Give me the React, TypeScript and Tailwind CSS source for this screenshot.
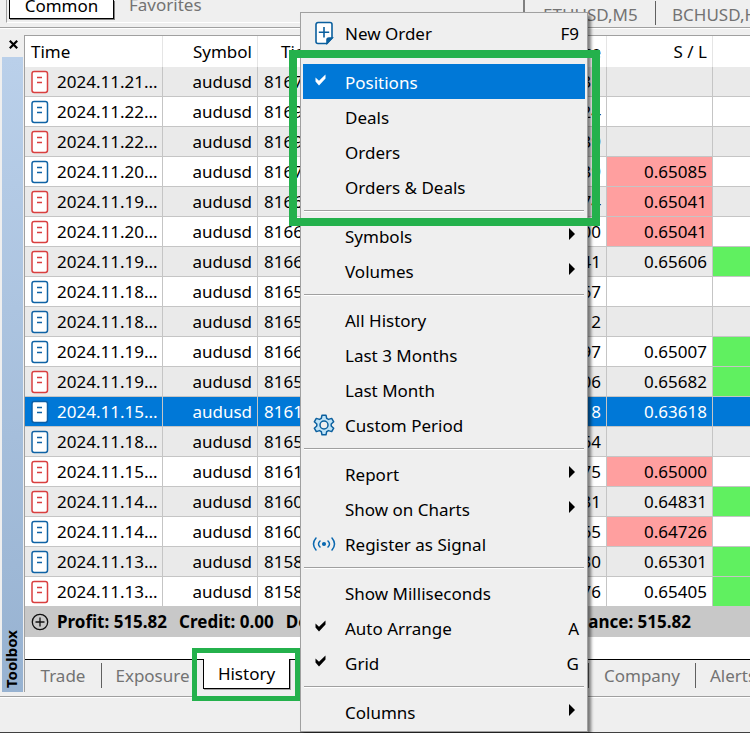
import type { ReactNode } from 'react'

type Deal = {
    time: string
    side: 'buy' | 'sell'
    ticket: string
    price: string
    sl?: string
    slHit?: boolean
    tpHit?: boolean
    selected?: boolean
}

const deals: Deal[] = [
    { time: '2024.11.21...', side: 'sell', ticket: '8167', price: '31' },
    { time: '2024.11.22...', side: 'buy', ticket: '8169', price: '24' },
    { time: '2024.11.22...', side: 'sell', ticket: '8169', price: '39' },
    { time: '2024.11.20...', side: 'buy', ticket: '8167', price: '39', sl: '0.65085', slHit: true },
    { time: '2024.11.19...', side: 'sell', ticket: '8166', price: '74', sl: '0.65041', slHit: true },
    { time: '2024.11.20...', side: 'sell', ticket: '8166', price: '00', sl: '0.65041', slHit: true },
    { time: '2024.11.19...', side: 'sell', ticket: '8166', price: '41', sl: '0.65606', tpHit: true },
    { time: '2024.11.18...', side: 'buy', ticket: '8165', price: '67' },
    { time: '2024.11.18...', side: 'buy', ticket: '8165', price: '2' },
    { time: '2024.11.19...', side: 'buy', ticket: '8166', price: '97', sl: '0.65007', tpHit: true },
    { time: '2024.11.19...', side: 'sell', ticket: '8165', price: '06', sl: '0.65682', tpHit: true },
    { time: '2024.11.15...', side: 'buy', ticket: '8161', price: '8', sl: '0.63618', selected: true },
    { time: '2024.11.18...', side: 'buy', ticket: '8165', price: '64' },
    { time: '2024.11.15...', side: 'sell', ticket: '8161', price: '75', sl: '0.65000', slHit: true },
    { time: '2024.11.14...', side: 'sell', ticket: '8160', price: '31', sl: '0.64831', tpHit: true },
    { time: '2024.11.14...', side: 'buy', ticket: '8160', price: '65', sl: '0.64726', slHit: true },
    { time: '2024.11.13...', side: 'buy', ticket: '8158', price: '30', sl: '0.65301', tpHit: true },
    { time: '2024.11.13...', side: 'sell', ticket: '8158', price: '76', sl: '0.65405', tpHit: true },
]

const DealIcon = ({ side, selected }: { side: 'buy' | 'sell'; selected?: boolean }) => {
    const color = side === 'buy' ? '#0f63a5' : '#d93f3f'
    return (
        <svg width="18" height="24" viewBox="0 0 18 24" className="shrink-0">
            <rect x="1" y="1.5" width="15.5" height="21" rx="2.2" fill="#fff" stroke={selected ? '#0b5fa8' : color} strokeWidth="1.5" />
            <path d="M6 7.500h5M6 12.500h5" stroke={color} strokeWidth="1.300" />
        </svg>
    )
}

const NewOrderIcon = () => (
    <svg width="20" height="24" viewBox="0 0 20 24" fill="none" stroke="#0a5f9e" strokeWidth="1.6">
        <path d="M4 1.500h12a2 2 0 0 1 2 2V17l-5 5.500H4a2 2 0 0 1-2-2V3.500a2 2 0 0 1 2-2z" fill="#fff" />
        <path d="M13 22v-3a2 2 0 0 1 2-2h3z" fill="#0a5f9e" />
        <path d="M10 6v10.500M4.800 11.200h10.400" />
    </svg>
)

const GearIcon = () => (
    <svg width="22" height="22" viewBox="0 0 22 22" stroke="#0a5f9e" strokeWidth="1.500" strokeLinejoin="round">
        <path
            d="M9 1.200h4l.7 3.200 1.800 1 3.200-1 2 3.400-2.500 2.200v2l2.500 2.200-2 3.400-3.200-1-1.800 1-.7 3.200H9l-.7-3.200-1.800-1-3.200 1-2-3.400 2.500-2.200v-2L1.300 7.800l2-3.400 3.200 1 1.800-1z"
            fill="#bfe3f7"
        />
        <circle cx="11" cy="11" r="4" fill="#efefef" />
    </svg>
)

const SignalIcon = () => (
    <svg width="24" height="16" viewBox="0 0 24 16" fill="none" stroke="#0a68b0" strokeWidth="1.500" strokeLinecap="round">
        <path d="M4 2Q-1 8 4 14M20 2q5 6 0 12M8 5q-3 3 0 6M16 5q3 3 0 6" />
        <circle cx="12" cy="8" r="1.300" fill="#0a68b0" />
    </svg>
)

const CheckIcon = () => (
    <svg width="12" height="12" viewBox="0 0 12 12" fill="currentColor">
        <path d="M.5 3.500 4 6.800 10.500.5V4.500L4 11.500.5 7.500z" />
    </svg>
)

type ItemProps = {
    label: string
    icon?: ReactNode
    checked?: boolean
    active?: boolean
    shortcut?: string
    submenu?: boolean
}

const MenuItem = ({ label, icon, checked, active, shortcut, submenu }: ItemProps) => (
    <button
        type="button"
        className={`flex h-[35px] w-full items-center pr-[6px] text-left ${active ? 'bg-[#0078d7] text-white' : 'text-black'}`}
    >
        <span className={`mr-[9px] ml-[9px] flex w-6 shrink-0 ${checked ? 'pb-1 pl-[3px]' : 'justify-center'}`}>
            {checked ? <CheckIcon /> : icon}
        </span>
        <span className="flex-1 pt-[2px] whitespace-nowrap">{label}</span>
        {shortcut && <span className="pt-[2px]">{shortcut}</span>}
        {submenu && (
            <svg width="6" height="12" viewBox="0 0 6 12" className="mr-1 mb-1">
                <path d="M0 0l6 6-6 6z" />
            </svg>
        )}
    </button>
)

const Separator = () => (
    <div className="h-[14px] px-px pt-[6px]">
        <div className="h-[2px] border-t border-[#a0a0a0] bg-white"></div>
    </div>
)

const ContextMenu = () => (
    <div className="absolute top-3 left-[300px] w-[288px] border border-[#a0a0a0] bg-[#efefef] p-[2px] shadow-[3px_3px_3px_rgba(0,0,0,0.5)]">
        <MenuItem label="New Order" icon={<NewOrderIcon />} shortcut="F9" />
        <Separator />
        <div className="relative">
            <MenuItem label="Positions" checked active />
            <MenuItem label="Deals" />
            <MenuItem label="Orders" />
            <MenuItem label="Orders &amp; Deals" />
            <div className="pointer-events-none absolute -top-[14px] -right-[15px] -bottom-[22px] -left-[14px] border-8 border-[#24b14c]"></div>
        </div>
        <Separator />
        <MenuItem label="Symbols" submenu />
        <MenuItem label="Volumes" submenu />
        <Separator />
        <MenuItem label="All History" />
        <MenuItem label="Last 3 Months" />
        <MenuItem label="Last Month" />
        <MenuItem label="Custom Period" icon={<GearIcon />} />
        <Separator />
        <MenuItem label="Report" submenu />
        <MenuItem label="Show on Charts" submenu />
        <MenuItem label="Register as Signal" icon={<SignalIcon />} />
        <Separator />
        <MenuItem label="Show Milliseconds" />
        <MenuItem label="Auto Arrange" checked shortcut="A" />
        <MenuItem label="Grid" checked shortcut="G" />
        <Separator />
        <MenuItem label="Columns" submenu />
    </div>
)

const TopTabs = () => (
    <div className="flex h-7 border-b border-[#a0a0a0]">
        <div className="ml-[6px] flex h-[23px] w-[513px] shrink-0 border-b border-l border-b-white border-l-[#a0a0a0]">
            <button
                type="button"
                className="ml-[2px] flex h-[19px] w-[105px] items-end justify-center border border-t-0 border-black bg-white shadow-[1px_1px_0_#808080]"
            >
                <span className="leading-6">Common</span>
            </button>
            <button type="button" className="ml-[15px] flex h-[19px] items-end text-[#737373]">
                <span className="leading-7">Favorites</span>
            </button>
        </div>
        <div className="ml-1 flex h-[27px] flex-1 overflow-hidden border-l-2 border-[#808080] text-[#737373]">
            <button type="button" className="w-[130px] shrink-0 pt-[3px] pl-[18px] text-left leading-6">ETHUSD,M5</button>
            <div className="mt-px h-6 w-px shrink-0 bg-[#606060]"></div>
            <button type="button" className="pt-[3px] pl-4 leading-6 whitespace-nowrap">BCHUSD,H1</button>
        </div>
    </div>
)

const HistoryTable = () => (
    <table className="w-full table-fixed border-separate border-spacing-0">
        <colgroup>
            <col className="w-[138px]" />
            <col className="w-[95px]" />
            <col className="w-[100px]" />
            <col className="w-[249px]" />
            <col className="w-[106px]" />
            <col />
        </colgroup>
        <thead>
            <tr className="h-[31px] bg-white [&>th]:border-r [&>th]:border-[#e5e5e5] [&>th]:p-0 [&>th]:font-normal [&>th:last-child]:border-r-0">
                <th className="text-left"><span className="pl-[6px]">Time</span></th>
                <th className="text-right"><span className="pr-[5px]">Symbol</span></th>
                <th className="text-left"><span className="pl-[23px]">Ticket</span></th>
                <th className="text-right"><span className="pr-[5px]">Price</span></th>
                <th className="text-right"><span className="pr-[5px]">S / L</span></th>
                <th></th>
            </tr>
        </thead>
        <tbody>
            {deals.map((deal, i) => (
                <tr
                    key={i}
                    className={`h-[30px] last:h-[29px] [&>td]:border-r [&>td]:border-b [&>td]:border-[#c5c5c5] [&>td]:p-0 [&>td:last-child]:border-r-0 last:[&>td]:border-b-0 ${
                        deal.selected ? 'bg-[#0078d7] text-white' : i % 2 ? 'bg-white' : 'bg-[#eaeaea]'
                    }`}
                >
                    <td>
                        <div className="flex items-center gap-2 pl-[6px] whitespace-nowrap">
                            <DealIcon side={deal.side} selected={deal.selected} />
                            {deal.time}
                        </div>
                    </td>
                    <td className="text-right"><span className="pr-[5px]">audusd</span></td>
                    <td><span className="pl-[6px]">{deal.ticket}</span></td>
                    <td className="text-right"><span className="pr-[5px]">{deal.price}</span></td>
                    <td className={`text-right ${deal.slHit ? 'bg-[#ff9f9f]' : ''}`}><span className="pr-[5px]">{deal.sl}</span></td>
                    <td className={deal.tpHit ? 'bg-[#60f060]' : ''}></td>
                </tr>
            ))}
        </tbody>
    </table>
)

const Summary = () => (
    <div className="flex h-[31px] items-center bg-[#c8c8c8] pl-[6px] font-bold whitespace-nowrap">
        <svg width="18" height="18" viewBox="0 0 18 18" fill="none" stroke="#111" strokeWidth="1.300" className="mr-2 shrink-0">
            <circle cx="9" cy="9" r="7.700" />
            <path d="M9 4.500v9M4.500 9h9" />
        </svg>
        <div className="flex w-[634px] shrink-0 gap-3">
            <span>Profit: 515.82</span>
            <span>Credit: 0.00</span>
            <span>Deposit: 0.00</span>
            <span className="ml-auto">Balance: 515.82</span>
        </div>
    </div>
)

const TabDivider = () => <div className="mt-[3px] h-[25px] w-px shrink-0 bg-[#606060]"></div>

const BottomTabs = () => (
    <div className="flex h-[33px] overflow-visible border-t border-black text-[#737373]">
        <button type="button" className="h-[31px] w-[76px] shrink-0">Trade</button>
        <TabDivider />
        <button type="button" className="h-[31px] w-[101px] shrink-0">Exposure</button>
        <div className="relative -mt-px h-[30px] w-[87px] shrink-0">
            <button type="button" className="h-full w-full border border-t-0 border-black bg-white text-black shadow-[1px_1px_0_#a0a0a0]">History</button>
            <div className="pointer-events-none absolute -top-[11px] -right-[10px] -bottom-3 -left-[11px] border-[5px] border-[#24b14c]"></div>
        </div>
        <div className="w-[298px] shrink-0"></div>
        <TabDivider />
        <button type="button" className="h-[31px] w-[106px] shrink-0">Company</button>
        <TabDivider />
        <button type="button" className="h-[31px] pl-[14px]">Alerts</button>
    </div>
)

const Toolbox = () => (
    <div className="flex pt-[6px]">
        <div className="flex w-6 shrink-0 flex-col pl-[2px]">
            <button type="button" aria-label="Close" className="flex h-[22px] items-center justify-center pb-1">
                <svg width="9" height="9" viewBox="0 0 9 9" stroke="#000" strokeWidth="2.200">
                    <path d="M.8.8l7.400 7.400M8.200.8L.8 8.200" />
                </svg>
            </button>
            <div className="flex w-[21px] flex-1 items-end justify-center bg-linear-to-b from-[#bad0ea] to-[#97b2d1] pr-1 pb-1">
                <span className="rotate-180 text-[15px] leading-5 font-bold [writing-mode:vertical-rl]">Toolbox</span>
            </div>
        </div>
        <div className="min-w-0 flex-1 overflow-x-clip border-t border-l border-[#a0a0a0]">
            <HistoryTable />
            <Summary />
            <div className="h-[22px] bg-white"></div>
            <BottomTabs />
        </div>
    </div>
)

export default function App() {
    return (
        <div className="relative flex min-h-screen flex-col overflow-hidden bg-[#efefef] font-['Noto_Sans',sans-serif] text-[17px] leading-6 text-black">
            <TopTabs />
            <div className="h-px bg-white"></div>
            <Toolbox />
            <div className="mt-1 h-[2px] border-t border-[#a0a0a0] bg-white"></div>
            <div className="flex-1 border-b border-[#404040]"></div>
            <ContextMenu />
        </div>
    )
}
